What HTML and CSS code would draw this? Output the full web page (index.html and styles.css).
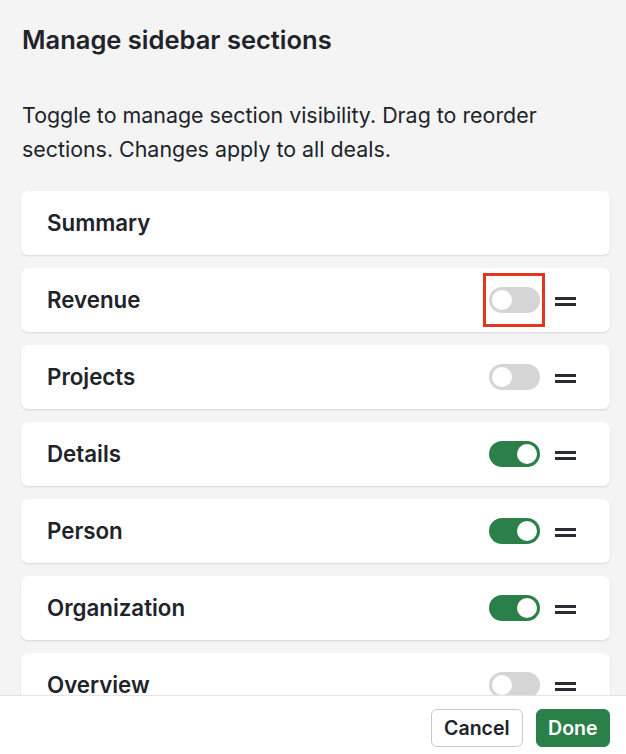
FILE: index.html
```html
<!DOCTYPE html>
<html>
<head>
<meta charset="utf-8">
<link rel="stylesheet" href="styles.css">
</head>
<body>
<div class="modal">
  <div class="content">
    <h1 class="title">Manage sidebar sections</h1>
    <p class="desc">Toggle to manage section visibility. Drag to reorder sections. Changes apply to all deals.</p>
    <div class="list">
      <div class="card"><span class="label">Summary</span></div>
      <div class="card"><span class="label">Revenue</span>
        <span class="toggle off highlighted"><span class="knob"></span><span class="mark"></span></span>
        <span class="handle"></span></div>
      <div class="card"><span class="label">Projects</span>
        <span class="toggle off"><span class="knob"></span></span>
        <span class="handle"></span></div>
      <div class="card"><span class="label">Details</span>
        <span class="toggle on"><span class="knob"></span></span>
        <span class="handle"></span></div>
      <div class="card"><span class="label">Person</span>
        <span class="toggle on"><span class="knob"></span></span>
        <span class="handle"></span></div>
      <div class="card"><span class="label">Organization</span>
        <span class="toggle on"><span class="knob"></span></span>
        <span class="handle"></span></div>
      <div class="card"><span class="label">Overview</span>
        <span class="toggle off"><span class="knob"></span></span>
        <span class="handle"></span></div>
    </div>
  </div>
  <div class="footer">
    <button class="btn cancel">Cancel</button>
    <button class="btn done">Done</button>
  </div>
</div>
</body>
</html>
```
FILE: styles.css
```css
html, body {
  margin: 0;
  padding: 0;
}
body {
  font-family: Inter, "Noto Sans", sans-serif;
  color: #21232a;
  background: #f4f4f4;
}
.modal {
  height: 754px;
  display: flex;
  flex-direction: column;
  overflow: hidden;
}
.content {
  flex: 1;
  overflow: hidden;
  padding: 24px 16px 0 21px;
}
.title {
  margin: 0 0 0 1px;
  font-size: 25.5px;
  line-height: 32px;
  font-weight: 600;
}
.desc {
  margin: 42px 0 25px 1px;
  font-size: 21.4px;
  line-height: 34px;
  font-weight: 400;
}
.list {
  display: flex;
  flex-direction: column;
  gap: 13px;
}
.card {
  height: 64px;
  flex-shrink: 0;
  background: #fff;
  border-radius: 7px;
  box-shadow: 0 1px 2px rgba(0,0,0,0.12);
  display: flex;
  align-items: center;
  padding: 0 34px 0 26px;
}
.label {
  flex: 1;
  font-size: 22.3px;
  font-weight: 600;
  margin-top: -2px;
}
.toggle {
  position: relative;
  width: 51px;
  height: 26px;
  border-radius: 13px;
  background: #d5d5d6;
  margin-right: 15px;
}
.toggle .knob {
  position: absolute;
  top: 3px;
  left: 3px;
  width: 20px;
  height: 20px;
  border-radius: 50%;
  background: #fff;
}
.toggle.on {
  background: #2b8049;
}
.toggle.on .knob {
  left: 28px;
}
.mark {
  position: absolute;
  left: -6px;
  right: -5px;
  top: -14px;
  bottom: -14px;
  border: 3.5px solid #e4361e;
}
.handle {
  width: 21px;
  height: 2.5px;
  border-top: 3px solid #2a2c31;
  border-bottom: 3px solid #2a2c31;
  margin-top: 3px;
}
.footer {
  height: 58px;
  flex-shrink: 0;
  background: #fff;
  border-top: 1px solid #e4e4e4;
  display: flex;
  justify-content: flex-end;
  align-items: flex-start;
  gap: 13px;
  padding: 13px 16px 0;
  box-sizing: border-box;
  height: 59px;
}
.btn {
  font-family: Inter, "Noto Sans", sans-serif;
  font-size: 19.5px;
  font-weight: 600;
  height: 38px;
  border-radius: 6px;
  padding: 0 12px;
  cursor: pointer;
}
.cancel {
  background: #fff;
  color: #21232a;
  border: 1px solid #c9c9cb;
}
.done {
  background: #2b8049;
  color: #fff;
  border: 1px solid #2b8049;
  padding: 0 11.5px;
}
```
